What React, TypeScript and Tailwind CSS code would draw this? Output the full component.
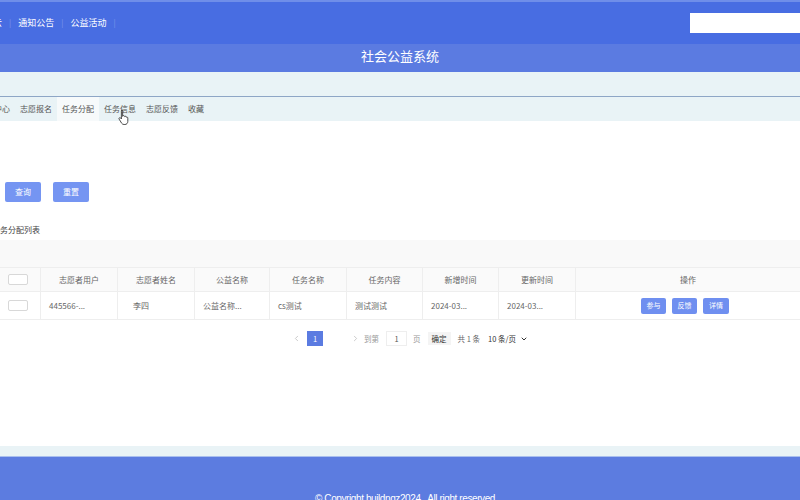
import { ChevronDown, ChevronLeft, ChevronRight } from 'lucide-react';

const NAV = ['云', '通知公告', '公益活动'];
const TABS = ['中心', '志愿报名', '任务分配', '任务信息', '志愿反馈', '收藏'];

const COLS: { label: string; w: string }[] = [
  { label: '志愿者用户', w: 'w-[77px]' },
  { label: '志愿者姓名', w: 'w-[77px]' },
  { label: '公益名称', w: 'w-[75px]' },
  { label: '任务名称', w: 'w-[77px]' },
  { label: '任务内容', w: 'w-[76px]' },
  { label: '新增时间', w: 'w-[76px]' },
  { label: '更新时间', w: 'w-[77px]' },
];

const ROW = ['445566-...', '李四', '公益名称...', 'cs测试', '测试测试', '2024-03...', '2024-03...'];

function Pointer() {
  // hand cursor hovering the tab bar
  return (
    <svg width="12" height="16" viewBox="0 0 12 16" className="absolute left-[118px] top-[109px]">
      <path
        d="M3.5 1.2c.7 0 1.1.5 1.1 1.1v5l.1-.1c.2-.6.9-.8 1.4-.5.4.2.5.6.5.9.3-.4.9-.5 1.3-.2.3.2.4.5.4.8.4-.3 1-.2 1.3.2.2.2.2.5.2.8v3.3c0 1.7-1.2 3-2.9 3H6c-1 0-1.8-.5-2.4-1.3L1.2 10.2c-.4-.5-.3-1.1.2-1.4.4-.3 1-.2 1.3.2l.7.9V2.3c0-.6.4-1.1 1.1-1.1z"
        fill="#fff"
        stroke="#222"
        strokeWidth="0.8"
      />
    </svg>
  );
}

export default function App() {
  return (
    <div className="relative flex h-[500px] w-[800px] flex-col overflow-hidden bg-white font-['Noto_Sans_CJK_SC','Noto_Sans',sans-serif]">
      {/* top bar */}
      <header className="flex h-[44px] shrink-0 items-center justify-between border-t-2 border-[#6f8ee9] bg-[#486de2]">
        <nav className="ml-[-7px] flex items-center text-[9px] text-white">
          {NAV.map((n) => (
            <div key={n} className="flex items-center">
              <span>{n}</span>
              <span className="mx-[7px] text-[8px] text-[#7e98ea]">|</span>
            </div>
          ))}
        </nav>
        <input className="mr-[-4px] h-[20px] w-[114px] bg-white outline-none" />
      </header>

      <div className="flex h-[28px] shrink-0 items-center justify-center bg-[#5b7be1] pb-[5px] text-[13px] text-white">
        社会公益系统
      </div>

      <div className="h-[25px] shrink-0 border-b border-[#8ea6c6] bg-[#e9f3f6]" />

      {/* tabs */}
      <div className="flex h-[24px] shrink-0 items-center bg-[#e9f3f6] text-[8px] text-[#555]">
        <div className="ml-[-11px] flex h-full items-stretch">
          {TABS.map((t) => (
            <div
              key={t}
              className={t === '任务分配' ? 'flex items-center bg-[#f7fafb] px-[5px]' : 'flex items-center px-[5px]'}
            >
              {t}
            </div>
          ))}
        </div>
      </div>

      {/* main */}
      <main className="flex flex-1 flex-col text-[8px] text-[#666]">
        <div className="mt-[61px] flex gap-[12px] pl-[5px]">
          <button className="h-[20px] w-[36px] rounded-[2px] bg-[#7595f2] text-white">查询</button>
          <button className="h-[20px] w-[36px] rounded-[2px] bg-[#7595f2] text-white">重置</button>
        </div>

        <div className="ml-[-8px] mt-[22px] text-[#444]">任务分配列表</div>

        <div className="mt-[4px] h-[27px] bg-[#f9f9f9]" />

        {/* table */}
        <div className="flex h-[25px] border-y border-[#eeeeee] bg-[#fafafa]">
          <div className="flex w-[41px] items-center justify-center border-r border-[#eeeeee]">
            <div className="ml-[-4px] h-[11px] w-[20px] rounded-[2px] border border-[#d8d8d8] bg-white" />
          </div>
          {COLS.map((c) => (
            <div key={c.label} className={`${c.w} flex items-center justify-center border-r border-[#eeeeee]`}>
              {c.label}
            </div>
          ))}
          <div className="flex flex-1 items-center justify-center">操作</div>
        </div>
        <div className="flex h-[28px] border-b border-[#eeeeee]">
          <div className="flex w-[41px] items-center justify-center border-r border-[#eeeeee]">
            <div className="ml-[-4px] h-[11px] w-[20px] rounded-[2px] border border-[#d8d8d8] bg-white" />
          </div>
          {COLS.map((c, i) => (
            <div
              key={c.label}
              className={`${c.w} flex items-center border-r border-[#eeeeee] ${i === 1 ? 'pl-[15px]' : 'pl-[8px]'}`}
            >
              {ROW[i]}
            </div>
          ))}
          <div className="flex flex-1 items-center justify-center gap-[6px] pr-[6px]">
            <button className="h-[16px] w-[25px] rounded-[2px] bg-[#6f8ff0] text-[7px] text-white">参与</button>
            <button className="h-[16px] w-[25px] rounded-[2px] bg-[#6f8ff0] text-[7px] text-white">反馈</button>
            <button className="h-[16px] w-[26px] rounded-[2px] bg-[#6f8ff0] text-[7px] text-white">详情</button>
          </div>
        </div>

        {/* pagination */}
        <div className="mt-[11px] flex h-[15px] items-center pl-[292px] text-[7.5px] text-[#666]">
          <ChevronLeft size={9} className="text-[#bbb]" />
          <div className="ml-[6px] flex h-[15px] w-[16px] items-center justify-center bg-[#5b7be1] text-white">1</div>
          <ChevronRight size={9} className="ml-[28px] text-[#bbb]" />
          <span className="ml-[4px] text-[#999]">到第</span>
          <div className="ml-[7px] flex h-[15px] w-[21px] items-center justify-center border border-[#eee] text-[#555]">1</div>
          <span className="ml-[6px] text-[#999]">页</span>
          <div className="ml-[7px] flex h-[13px] w-[23px] items-center justify-center bg-[#f4f4f4] text-[#333]">确定</div>
          <span className="ml-[7px]">共 1 条</span>
          <div className="ml-[5px] flex h-[13px] items-center gap-[4px] px-[3px] text-[#333]">
            10 条/页 <ChevronDown size={8} strokeWidth={3} />
          </div>
        </div>
      </main>

      <div className="h-[11px] shrink-0 border-b border-[#a9bfee] bg-[#e9f3f6]" />
      <footer className="flex h-[43px] shrink-0 items-end justify-center bg-[#5c7ce0] pl-[10px] font-['Liberation_Sans',sans-serif] text-[10px] leading-[10px] text-white">
        <span className="mb-[-4px] tracking-[-0.4px]">© Copyright buildnqz2024 . All right reserved</span>
      </footer>

      <Pointer />
    </div>
  );
}
